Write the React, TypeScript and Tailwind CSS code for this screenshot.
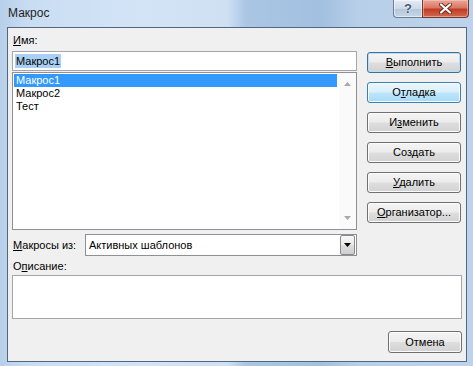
import React from "react";

const btnBase =
  "h-[21px] flex items-center justify-center rounded-[3px] border text-[11px] leading-none";
const btnNormal =
  "border-[#707070] bg-[linear-gradient(to_bottom,#f4f4f4_0%,#ececec_48%,#dedede_52%,#d2d2d2_100%)] shadow-[inset_0_0_0_1px_#fbfbfb]";
const btnDefault =
  "border-[#3c6f99] bg-[linear-gradient(to_bottom,#f4f4f4_0%,#ececec_48%,#dedede_52%,#d2d2d2_100%)] shadow-[inset_0_0_0_1px_#b9def6]";
const btnHover =
  "border-[#3c7fb1] bg-[linear-gradient(to_bottom,#eaf6fd_0%,#d9f0fc_48%,#bee6fd_52%,#a7d9f5_100%)] shadow-[inset_0_0_0_1px_#f3fbff]";

const Arrow = ({ up, color }: { up?: boolean; color: string }) => (
  <svg width="7" height="4" viewBox="0 0 7 4">
    <path d={up ? "M0 4 L3.5 0 L7 4 Z" : "M0 0 L7 0 L3.5 4 Z"} fill={color} />
  </svg>
);

export default function App() {
  return (
    <div className="w-[473px] h-[366px] overflow-hidden flex flex-col font-['Liberation_Sans',Arial,sans-serif] text-[11px] text-black bg-[linear-gradient(to_right,#b7cfe9_0%,#c9ddf2_6%,#d3e4f6_30%,#cfe0f3_48%,#aac6e4_52%,#a3c0e0_68%,#b8cfe9_76%,#bed3eb_100%)]">
      {/* Title bar */}
      <div className="h-[27px] flex items-start shrink-0">
        <span className="ml-[8px] mt-[6px] text-[12px] leading-[15px] text-[#1e1e1e]">Макрос</span>
        <div className="ml-auto mr-[4px] flex h-[18px]">
          <div className="w-[29px] h-[18px] flex items-center justify-center border border-[#6b7f96] border-t-0 border-r-0 rounded-bl-[4px] bg-[linear-gradient(to_bottom,#e4ecf5_0%,#ccd9e8_50%,#b4c6da_51%,#c8d6e6_100%)] shadow-[inset_0_0_0_1px_rgba(255,255,255,0.5)]">
            <span className="text-[13px] font-bold leading-none text-[#4b5a6d] [text-shadow:0_0_2px_#fff]">?</span>
          </div>
          <div className="w-[47px] h-[18px] flex items-center justify-center border border-[#6e3a32] border-t-0 rounded-br-[4px] bg-[linear-gradient(to_bottom,#e9a99a_0%,#db7762_45%,#c13c24_55%,#d26a4f_100%)] shadow-[inset_0_0_0_1px_rgba(255,210,200,0.5)]">
            <svg width="13" height="11" viewBox="0 0 13 11">
              <path d="M2 1.5 L11 9.5 M11 1.5 L2 9.5" stroke="#6b2a20" strokeWidth="4" strokeLinecap="round" />
              <path d="M2 1.5 L11 9.5 M11 1.5 L2 9.5" stroke="#ffffff" strokeWidth="2.2" strokeLinecap="round" />
            </svg>
          </div>
        </div>
      </div>

      {/* Client area */}
      <div className="ml-[7px] w-[460px] h-[335px] shrink-0 border border-[#52667f] bg-[#f0f0f0] flex flex-col">
        <div className="flex pl-[4px]">
          {/* Left column */}
          <div className="w-[345px] flex flex-col">
            <div className="h-[23px] pt-[6px] pl-[1px] leading-[13px]">
              <u>И</u>мя:
            </div>
            <div className="h-[20px] border border-[#a4a6ab] bg-white flex items-center pl-[2px]">
              <span className="bg-[#a9d0f3] leading-[14px] px-[1px]">Макрос1</span>
            </div>
            <div className="mt-[1px] h-[158px] border border-[#8e9096] bg-white flex">
              <div className="flex-1 pl-[1px] pt-[1px] flex flex-col">
                <div className="h-[13px] leading-[13px] bg-[#3399ff] text-white pl-[2px] mr-[2px]">Макрос1</div>
                <div className="h-[13px] leading-[13px] pl-[2px]">Макрос2</div>
                <div className="h-[13px] leading-[13px] pl-[2px]">Тест</div>
              </div>
              <div className="w-[17px] flex flex-col justify-between bg-[#fafafa]">
                <div className="h-[17px] flex items-center justify-center pt-[4px]">
                  <Arrow up color="#a8a8a8" />
                </div>
                <div className="h-[17px] flex items-center justify-center pb-[6px]">
                  <Arrow color="#a8a8a8" />
                </div>
              </div>
            </div>
            <div className="mt-[4px] h-[22px] flex items-center">
              <div className="w-[73px] pl-[1px] leading-[13px]">
                <u>М</u>акросы из:
              </div>
              <div className="flex-1 h-[22px] border border-[#8e9096] bg-white flex items-center">
                <span className="pl-[3px] flex-1">Активных шаблонов</span>
                <div className="w-[15px] h-[20px] mr-[1px] border border-[#8a8a8a] rounded-[2px] flex items-center justify-center bg-[linear-gradient(to_bottom,#f6f6f6_0%,#ebebeb_48%,#dddddd_52%,#cfcfcf_100%)]">
                  <Arrow color="#000000" />
                </div>
              </div>
            </div>
          </div>

          {/* Right column buttons */}
          <div className="ml-[10px] pt-[24px] w-[94px] flex flex-col gap-[9px]">
            <div className={`${btnBase} ${btnDefault}`}>
              <span><u>В</u>ыполнить</span>
            </div>
            <div className={`${btnBase} ${btnHover}`}>
              <span>О<u>т</u>ладка</span>
            </div>
            <div className={`${btnBase} ${btnNormal}`}>
              <span>И<u>з</u>менить</span>
            </div>
            <div className={`${btnBase} ${btnNormal}`}>
              <span>Соз<u>д</u>ать</span>
            </div>
            <div className={`${btnBase} ${btnNormal}`}>
              <span><u>У</u>далить</span>
            </div>
            <div className={`${btnBase} ${btnNormal}`}>
              <span><u>О</u>рганизатор...</span>
            </div>
          </div>
        </div>

        <div className="pl-[5px] h-[19px] pt-[4px] leading-[13px]">
          О<u>п</u>исание:
        </div>
        <div className="ml-[4px] w-[450px] h-[44px] border border-[#a4a6ab] bg-white" />

        <div className="flex justify-end pr-[4px] mt-[12px]">
          <div className="w-[74px] h-[22px] flex items-center justify-center rounded-[3px] border border-[#707070] text-[11px] leading-none bg-[linear-gradient(to_bottom,#f4f4f4_0%,#ececec_48%,#dedede_52%,#d2d2d2_100%)] shadow-[inset_0_0_0_1px_#fbfbfb]">
            <span>Отмена</span>
          </div>
        </div>
      </div>
    </div>
  );
}
